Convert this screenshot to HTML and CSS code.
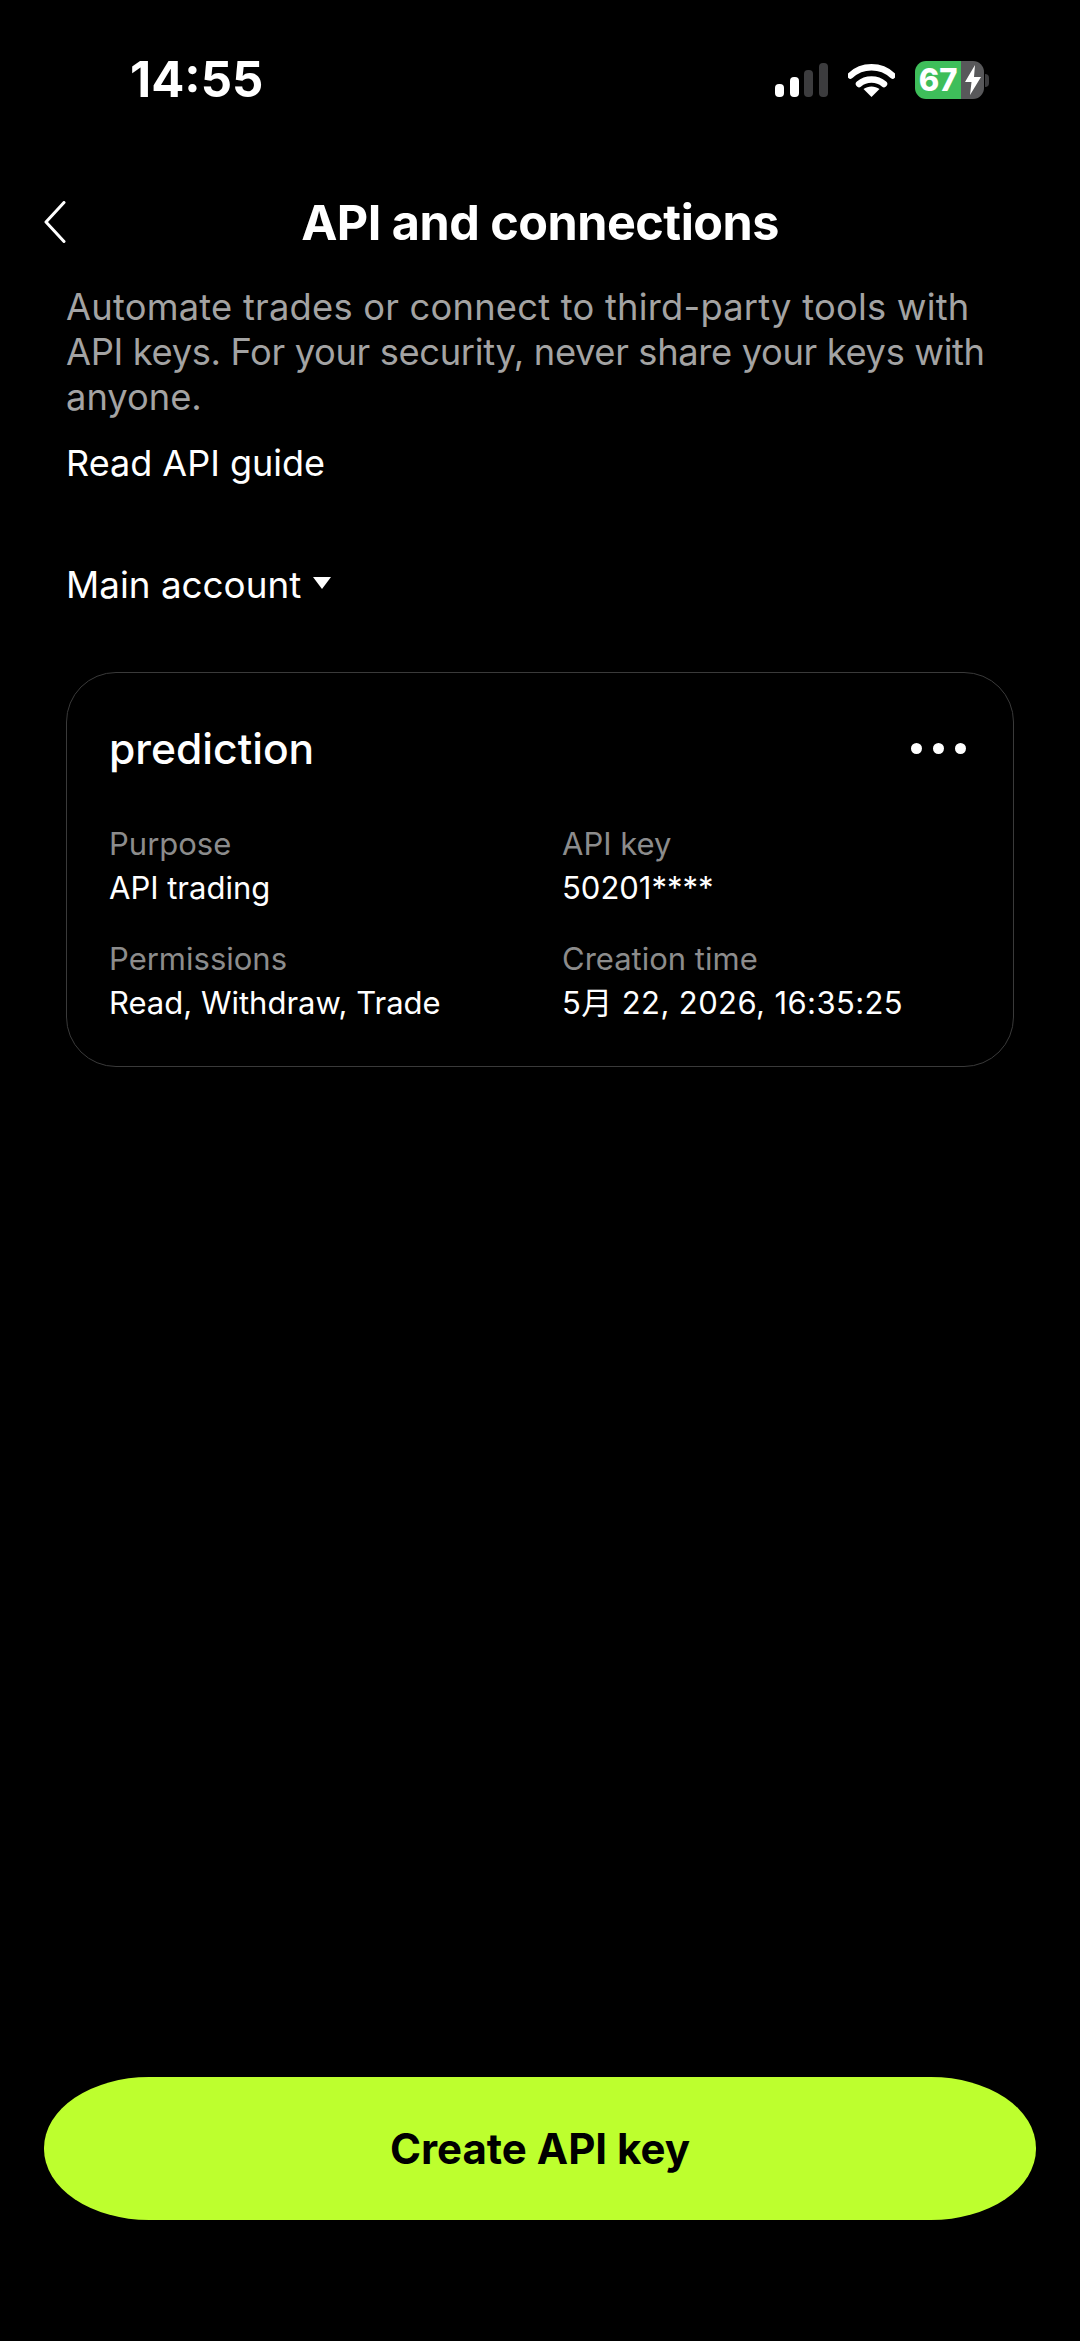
FILE: index.html
```html
<!DOCTYPE html>
<html lang="en">
<head>
    <meta charset="UTF-8">
    <meta name="viewport" content="width=device-width, initial-scale=1.0">
    <title>API and connections</title>
    <link rel="stylesheet" href="styles.css">
</head>
<body>
    <div class="status-bar">
        <span class="clock">14:55</span>
        <div class="status-icons">
            <svg class="signal" width="53" height="34" viewBox="0 0 53 34">
                <rect x="0" y="21" width="9" height="13" rx="4" fill="#fff"/>
                <rect x="15" y="14" width="9" height="20" rx="4" fill="#fff"/>
                <rect x="29" y="7" width="9" height="27" rx="4" fill="#3c3c3e"/>
                <rect x="44" y="0" width="9" height="34" rx="4" fill="#3c3c3e"/>
            </svg>
            <svg class="wifi" width="47" height="34" viewBox="0 0 47 34">
                <path d="M2.5 12.5 C14 1.5 33 1.5 44.5 12.5" fill="none" stroke="#fff" stroke-width="6.5" stroke-linecap="round"/>
                <path d="M11 21 C18 15 29 15 36 21" fill="none" stroke="#fff" stroke-width="6.5" stroke-linecap="round"/>
                <path d="M23.5 34 L15.5 26 C20 22.5 27 22.5 31.5 26 Z" fill="#fff"/>
            </svg>
            <div class="battery">
                <div class="battery-body">
                    <span class="battery-level">67</span>
                    <span class="battery-rest">
                        <svg width="16" height="30" viewBox="0 0 16 30">
                            <path d="M10 0 L0 17 H6.5 L5 30 L16 12 H9 Z" fill="#fff"/>
                        </svg>
                    </span>
                </div>
                <span class="battery-nub"></span>
            </div>
        </div>
    </div>

    <header class="top-bar">
        <svg class="back" width="22" height="42" viewBox="0 0 22 42">
            <path d="M20 1.5 L2 21 L20 40.5" fill="none" stroke="#fff" stroke-width="3" stroke-linecap="round" stroke-linejoin="round"/>
        </svg>
        <h1>API and connections</h1>
    </header>

    <main class="content">
        <p class="intro">
            <span class="intro-first">Automate trades or connect to third-party tools with</span>
            <span class="intro-second">API keys. For your security, never share your keys with</span>
            <span>anyone.</span>
        </p>
        <a class="guide" href="#guide">Read API guide</a>

        <div class="account">
            Main account
            <span class="caret"></span>
        </div>

        <section class="card">
            <div class="card-head">
                <h2>prediction</h2>
                <div class="dots"><i></i><i></i><i></i></div>
            </div>
            <div class="card-grid">
                <div>
                    <div class="label">Purpose</div>
                    <div class="value">API trading</div>
                </div>
                <div>
                    <div class="label">API key</div>
                    <div class="value">50201****</div>
                </div>
                <div>
                    <div class="label">Permissions</div>
                    <div class="value">Read, Withdraw, Trade</div>
                </div>
                <div>
                    <div class="label">Creation time</div>
                    <div class="value value-time">5月 22, 2026, 16:35:25</div>
                </div>
            </div>
        </section>
    </main>

    <div class="footer">
        <button class="create-btn">Create API key</button>
    </div>
</body>
</html>
```

FILE: styles.css
```css
* {
    box-sizing: border-box;
}

html, body {
    margin: 0;
    padding: 0;
    background: #000;
}

body {
    width: 1080px;
    height: 2341px;
    display: flex;
    flex-direction: column;
    color: #fff;
    font-family: Inter, "Noto Sans CJK SC", sans-serif;
}

.status-bar {
    height: 112px;
    padding: 48px 91px 0 130px;
    display: flex;
    justify-content: space-between;
    align-items: flex-start;
}

.clock {
    font-size: 49px;
    font-weight: 700;
    line-height: 64px;
}

.status-icons {
    display: flex;
    align-items: center;
    height: 64px;
}

.signal {
    margin-right: 20px;
}

.wifi {
    margin-right: 20px;
}

.battery {
    display: flex;
    align-items: center;
}

.battery-body {
    width: 69px;
    height: 38px;
    border-radius: 11px;
    overflow: hidden;
    display: flex;
}

.battery-level {
    width: 46px;
    background: #3ebe5a;
    font-size: 31px;
    font-weight: 800;
    line-height: 38px;
    text-align: center;
}

.battery-rest {
    flex: 1;
    background: #58585a;
    display: flex;
    align-items: center;
    justify-content: center;
}

.battery-nub {
    width: 4px;
    height: 13px;
    margin-left: 1px;
    background: #3c3c3e;
    border-radius: 0 4px 4px 0;
}

.top-bar {
    height: 66px;
    margin-top: 77px;
    display: flex;
    align-items: center;
    justify-content: center;
    position: relative;
}

.top-bar h1 {
    margin: 0;
    font-size: 48.5px;
    font-weight: 700;
    letter-spacing: -0.5px;
}

.back {
    position: absolute;
    left: 44px;
    top: 12px;
}

.content {
    flex: 1;
    padding: 0 66px;
}

.intro {
    margin: 30px 0 0;
    font-size: 36.3px;
    line-height: 45px;
    color: #a3a3a3;
}

.intro span {
    display: block;
    white-space: nowrap;
}

.intro .intro-first {
    letter-spacing: 0.23px;
}

.intro .intro-second {
    letter-spacing: -0.35px;
}

.guide {
    display: block;
    margin-top: 21px;
    font-size: 36px;
    line-height: 45px;
    color: #fff;
    text-decoration: none;
}

.account {
    margin-top: 76px;
    font-size: 36.8px;
    line-height: 45px;
    display: flex;
    align-items: center;
}

.caret {
    margin-left: 12px;
    margin-bottom: 4px;
    border-left: 9px solid transparent;
    border-right: 9px solid transparent;
    border-top: 12px solid #fff;
}

.card {
    margin-top: 65px;
    height: 395px;
    padding: 47px 42px 0;
    border: 1px solid #3a3a3a;
    border-radius: 50px;
}

.card-head {
    display: flex;
    justify-content: space-between;
    align-items: center;
    height: 56px;
}

.card-head h2 {
    margin: 0;
    font-size: 42.6px;
    font-weight: 500;
}

.dots {
    display: flex;
    gap: 11px;
    margin-right: 5px;
}

.dots i {
    width: 11px;
    height: 11px;
    border-radius: 50%;
    background: #fff;
}

.card-grid {
    margin-top: 46px;
    display: grid;
    grid-template-columns: 453px 1fr;
    row-gap: 27px;
}

.label {
    font-size: 31px;
    line-height: 44px;
    color: #8c8c8c;
}

.value {
    font-size: 31px;
    line-height: 44px;
    color: #fff;
}

.value-time {
    letter-spacing: 0.4px;
}

.footer {
    padding: 0 44px 121px;
}

.create-btn {
    display: block;
    width: 100%;
    height: 143px;
    border: none;
    border-radius: 105px / 71px;
    background: #bdff2e;
    color: #000;
    font-family: inherit;
    font-size: 42px;
    font-weight: 700;
}
```
